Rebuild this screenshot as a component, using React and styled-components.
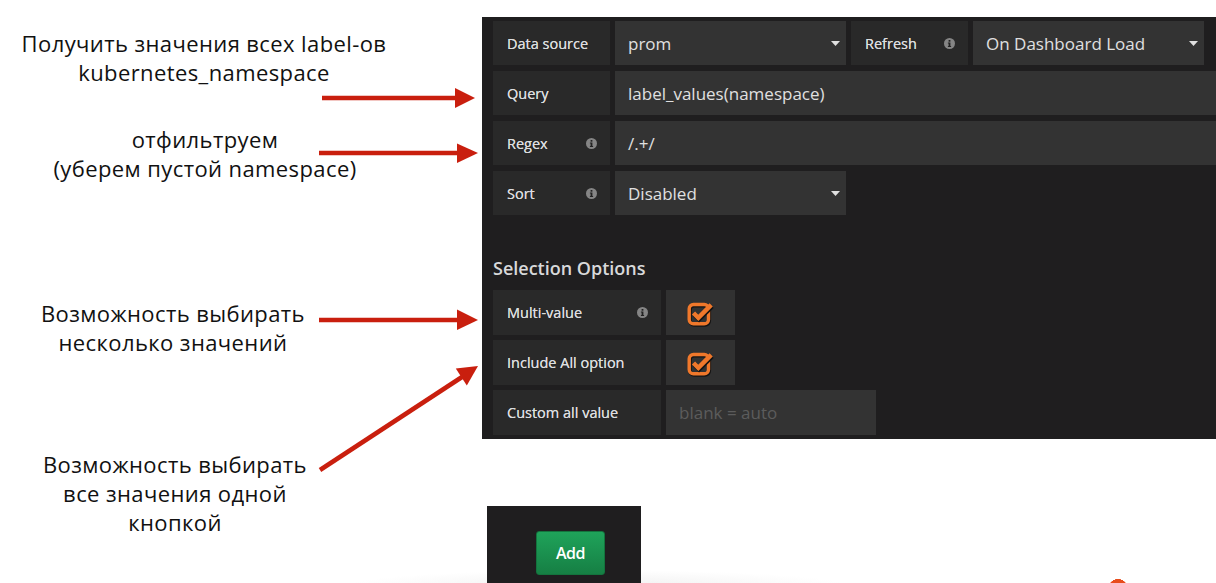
import styled, { createGlobalStyle } from "styled-components";

const GlobalStyle = createGlobalStyle`
  html, body {
    margin: 0;
    padding: 0;
    background: #ffffff;
  }
`;

const Page = styled.div`
  position: relative;
  width: 1216px;
  height: 583px;
  overflow: hidden;
  display: flex;
  background:
    radial-gradient(circle 10px at 1118px 589px, #e84c1c 98%, transparent 100%),
    radial-gradient(ellipse 250px 16px at 598px 586px, #f0f0f0, #ffffff 100%);
`;

const LeftColumn = styled.div`
  width: 482px;
  flex-shrink: 0;
`;

const Note = styled.p`
  width: ${(p) => p.$width}px;
  margin: ${(p) => p.$top}px 0 0;
  font-family: "Open Sans", Lato, sans-serif;
  font-size: 22px;
  line-height: 29px;
  letter-spacing: 0.4px;
  color: #111111;
  text-align: center;
  white-space: nowrap;
`;

const RightColumn = styled.div`
  flex: 1;
  min-width: 0;
`;

const Panel = styled.div`
  margin-top: 17px;
  height: 422px;
  box-sizing: border-box;
  padding: 4px 0 4px 11px;
  background: #1f1e1f;
  font-family: "Open Sans", sans-serif;
  color: #d8d9da;
`;

const Row = styled.div`
  display: flex;
  gap: 5px;
  height: ${(p) => p.$height || 44}px;
  margin-bottom: ${(p) => (p.$last ? 0 : p.$gap || 6)}px;
`;

const Label = styled.div`
  width: ${(p) => p.$width}px;
  flex-shrink: 0;
  box-sizing: border-box;
  padding: 0 13px 0 14px;
  display: flex;
  align-items: center;
  justify-content: space-between;
  background: #292929;
  font-size: 14.5px;
  font-weight: 500;
  color: #dcdddf;
  text-shadow: 0 0 0.4px #dcdddf;
`;

const Field = styled.div`
  ${(p) => (p.$width ? `width: ${p.$width}px; flex-shrink: 0;` : "flex: 1;")}
  box-sizing: border-box;
  padding: 0 6px 0 13px;
  display: flex;
  align-items: center;
  justify-content: space-between;
  background: #333333;
  font-size: 17px;
  color: ${(p) => (p.$placeholder ? "#5c5c5c" : "#e0e0e0")};
  white-space: nowrap;
`;

const CheckCell = styled.div`
  width: 69px;
  flex-shrink: 0;
  display: flex;
  align-items: center;
  justify-content: center;
  background: #313131;
`;

const Heading = styled.h5`
  margin: 42px 0 11px;
  font-size: 18px;
  line-height: 22px;
  font-weight: 600;
  color: #d8d9da;
`;

const AddArea = styled.div`
  margin: 67px 0 0 5px;
  width: 154px;
  height: 90px;
  box-sizing: border-box;
  padding: 25px 0 0 49px;
  background: #1f1e1f;
`;

const AddButton = styled.button`
  width: 69px;
  height: 44px;
  border: 1px solid #13743d;
  border-radius: 3px;
  background: linear-gradient(to bottom, #1fa35a, #167f44);
  color: #ffffff;
  font-family: "Open Sans", sans-serif;
  font-size: 16px;
  font-weight: 600;
  letter-spacing: -0.5px;
  cursor: pointer;
`;

const Overlay = styled.svg`
  position: absolute;
  left: 0;
  top: 0;
  pointer-events: none;
`;

const Caret = () => (
  <svg width="9" height="5" viewBox="0 0 9 5">
    <path d="M0 0 H9 L4.5 5 Z" fill="#e0e0e0" />
  </svg>
);

const Info = () => (
  <svg width="11" height="11" viewBox="0 0 11 11">
    <circle cx="5.5" cy="5.5" r="5.5" fill="#858585" />
    <rect x="4.6" y="2" width="1.8" height="1.7" fill="#222" />
    <path d="M3.9 4.6 H6.4 V8 H7.1 V9 H3.9 V8 H4.6 V5.6 H3.9 Z" fill="#222" />
  </svg>
);

const CheckIcon = () => (
  <svg width="30" height="28" viewBox="0 0 28 26">
    <rect x="3" y="5" width="18" height="18" rx="4" fill="none" stroke="#141414" strokeWidth="3.4" transform="translate(0.7 1.2)" />
    <rect x="3" y="5" width="18" height="18" rx="4" fill="none" stroke="#f0782b" strokeWidth="3.2" />
    <path d="M7 13 L11.5 17.5 L23.5 5.5" fill="none" stroke="#141414" strokeWidth="4.6" transform="translate(0.7 1.2)" />
    <path d="M7 13 L11.5 17.5 L23.5 5.5" fill="none" stroke="#f0782b" strokeWidth="4.2" />
  </svg>
);

const Arrow = ({ x1, y1, bx, by, tip, h1, h2 }) => (
  <g>
    <line x1={x1} y1={y1} x2={bx} y2={by} stroke="#c91f0e" strokeWidth="4.5" />
    <polygon points={`${tip} ${h1} ${h2}`} fill="#c91f0e" />
  </g>
);

const App = () => {
  return (
    <>
      <GlobalStyle />
      <Page>
        <LeftColumn>
          <Note $width={408} $top={29}>
            Получить значения всех label-ов
            <br />
            kubernetes_namespace
          </Note>
          <Note $width={410} $top={38}>
            отфильтруем
            <br />
            (уберем пустой namespace)
          </Note>
          <Note $width={346} $top={116}>
            Возможность выбирать
            <br />
            несколько значений
          </Note>
          <Note $width={350} $top={93}>
            Возможность выбирать
            <br />
            все значения одной
            <br />
            кнопкой
          </Note>
        </LeftColumn>

        <RightColumn>
          <Panel>
            <Row>
              <Label $width={117}>Data source</Label>
              <Field $width={231}>
                prom
                <Caret />
              </Field>
              <Label $width={117}>
                Refresh
                <Info />
              </Label>
              <Field $width={231}>
                On Dashboard Load
                <Caret />
              </Field>
            </Row>
            <Row>
              <Label $width={117}>Query</Label>
              <Field>label_values(namespace)</Field>
            </Row>
            <Row>
              <Label $width={117}>
                Regex
                <Info />
              </Label>
              <Field>/.+/</Field>
            </Row>
            <Row>
              <Label $width={117}>
                Sort
                <Info />
              </Label>
              <Field $width={231}>
                Disabled
                <Caret />
              </Field>
            </Row>

            <Heading>Selection Options</Heading>
            <Row $height={45} $gap={5}>
              <Label $width={168}>
                Multi-value
                <Info />
              </Label>
              <CheckCell>
                <CheckIcon />
              </CheckCell>
            </Row>
            <Row $height={45} $gap={5}>
              <Label $width={168}>Include All option</Label>
              <CheckCell>
                <CheckIcon />
              </CheckCell>
            </Row>
            <Row $height={45} $last>
              <Label $width={168}>Custom all value</Label>
              <Field $width={210} $placeholder>
                blank = auto
              </Field>
            </Row>
          </Panel>

          <AddArea>
            <AddButton>Add</AddButton>
          </AddArea>
        </RightColumn>

        <Overlay width="1216" height="583" viewBox="0 0 1216 583">
          <Arrow x1={322} y1={98} bx={457} by={98} tip="475,98" h1="455,88" h2="455,108" />
          <Arrow x1={319} y1={153} bx={459} by={153} tip="478,153" h1="457,143.5" h2="457,163" />
          <Arrow x1={319} y1={320} bx={459} by={320} tip="478,320" h1="457,309.5" h2="457,330" />
          <Arrow x1={320} y1={470} bx={462} by={377} tip="478,366" h1="466.8,385.4" h2="455.8,368.6" />
        </Overlay>
      </Page>
    </>
  );
};

export default App;
